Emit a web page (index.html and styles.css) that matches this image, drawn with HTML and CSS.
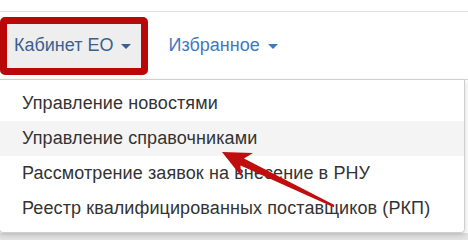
FILE: index.html
```html
<!DOCTYPE html>
<html lang="ru">
<head>
	<meta charset="UTF-8">
	<title>Кабинет ЕО</title>
	<link rel="stylesheet" href="styles.css">
</head>
<body>
	<div class="page">
		<div class="navbar">
			<a class="nav-item current" href="#">Кабинет ЕО <span class="caret"></span></a>
			<a class="nav-item" href="#">Избранное <span class="caret"></span></a>
		</div>
		<ul class="menu">
			<li><a href="#">Управление новостями</a></li>
			<li class="hover"><a href="#">Управление справочниками</a></li>
			<li><a href="#">Рассмотрение заявок на внесение в РНУ</a></li>
			<li><a href="#">Реестр квалифицированных поставщиков (РКП)</a></li>
		</ul>
		<div class="bottom"></div>
		<svg class="arrow" width="468" height="240" viewBox="0 0 468 240">
			<polygon points="222,152 253,153 244,158.5 334.4,205.1 333.6,207.2 240.5,165.5 241,176" fill="#c00d0d"/>
		</svg>
	</div>
</body>
</html>
```

FILE: styles.css
```css
body{
	margin: 0;
	background: #fff;
	font-family: "Liberation Sans", Arial, sans-serif;
}
.page{
	position: relative;
	width: 468px;
	height: 240px;
	padding-top: 11px;
	box-sizing: border-box;
	overflow: hidden;
}
.navbar{
	height: 67px;
	border-top: 1px solid #e0e0e0;
	border-bottom: 1px solid #d6d6d6;
	display: flex;
	align-items: center;
	gap: 20px;
}
.nav-item{
	text-decoration: none;
	font-size: 18px;
	color: #3f79bd;
	display: flex;
	align-items: center;
	gap: 8px;
}
.nav-item.current{
	height: 44px;
	padding: 0 10px 0 7px;
	border: 7px solid #b80808;
	border-radius: 5px;
	background: #eee;
	color: #3c5f8e;
}
.caret{
	width: 0;
	height: 0;
	border-left: 5px solid transparent;
	border-right: 5px solid transparent;
	border-top: 5px solid currentColor;
	margin-top: 2px;
}
.menu{
	list-style: none;
	margin: -1px 0 0 -1px;
	padding: 6px 0;
	width: 466px;
	border: 1px solid #cfcfcf;
	border-radius: 0 0 4px 4px;
	box-shadow: 0 2px 5px rgba(0,0,0,0.18);
	background: #fff;
	box-sizing: border-box;
	position: relative;
}
.menu li{
	height: 35px;
	display: flex;
	align-items: center;
}
.menu li.hover{
	background: #f4f4f4;
}
.menu a{
	padding-left: 22px;
	font-size: 18px;
	letter-spacing: 0.1px;
	color: #333;
	text-decoration: none;
}
.bottom{
	height: 8px;
	background: #e2e2e2;
}
.arrow{
	position: absolute;
	top: 0;
	left: 0;
	pointer-events: none;
}
```
